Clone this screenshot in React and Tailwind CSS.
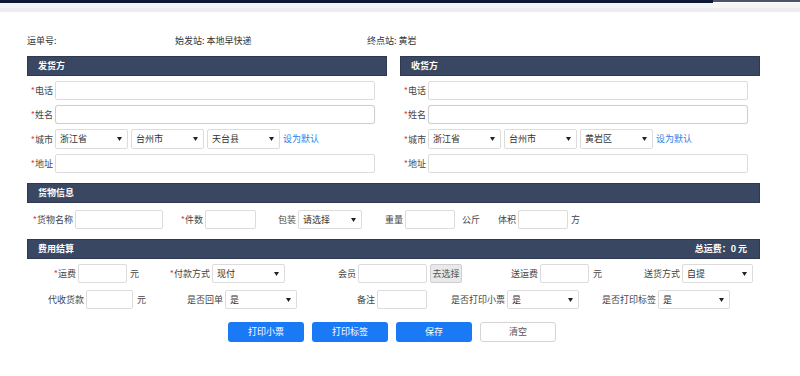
import React from 'react'

const FONT = { fontFamily: '"Noto Sans CJK SC", "Noto Sans", sans-serif' }

function Star() {
  return <span className="text-[#e43b3b]">*</span>
}

function Label({ w, req, children }) {
  return (
    <div className={`${w} shrink-0 text-right pr-[2px] text-[9px] text-[#444] leading-none`}>
      {req && <Star />}
      {children}
    </div>
  )
}

function Input({ w, h = 'h-[19px]' }) {
  return <div className={`${w} ${h} shrink-0 bg-white border border-[#dcdcdc] rounded-[2px]`} />
}

function Select({ w, value, h = 'h-[19px]' }) {
  return (
    <div className={`${w} ${h} shrink-0 flex items-center justify-between bg-white border border-[#dcdcdc] rounded-[2px] pl-[4px] pr-[5px] text-[9px] text-[#333]`}>
      <span>{value}</span>
      <svg width="5" height="4" viewBox="0 0 5 4">
        <path d="M0 0 L5 0 L2.5 4 Z" fill="#222" />
      </svg>
    </div>
  )
}

function Header({ title, right }) {
  return (
    <div className="h-[20px] flex items-center justify-between bg-[#3a4762] border border-[#2f3a52] pl-[10px] pr-[12px] text-white text-[9px] font-bold">
      <span>{title}</span>
      {right && <span>{right}</span>}
    </div>
  )
}

function Party({ title, district }) {
  return (
    <div className="w-[360px] flex flex-col">
      <Header title={title} />
      <div className="mt-[5px] flex flex-col gap-[5px]">
        <div className="flex items-center">
          <Label w="w-[28px]" req>电话</Label>
          <Input w="w-[320px]" />
        </div>
        <div className="flex items-center">
          <Label w="w-[28px]" req>姓名</Label>
          <div className="w-[320px] h-[19px] bg-white border border-[#cfcfcf] rounded-[3px] shadow-[0_0_1px_#ddd]" />
        </div>
        <div className="flex items-center">
          <Label w="w-[28px]" req>城市</Label>
          <Select w="w-[73px]" h="h-[20px]" value="浙江省" />
          <div className="ml-[3px]"><Select w="w-[73px]" h="h-[20px]" value="台州市" /></div>
          <div className="ml-[3px]"><Select w="w-[73px]" h="h-[20px]" value={district} /></div>
          <span className="ml-[3px] text-[9px] text-[#2b7fe8]">设为默认</span>
        </div>
        <div className="flex items-center">
          <Label w="w-[28px]" req>地址</Label>
          <Input w="w-[320px]" />
        </div>
      </div>
    </div>
  )
}

function Unit({ ml, children }) {
  return <span className={`${ml} text-[9px] text-[#444] shrink-0`}>{children}</span>
}

function Btn({ children, white }) {
  return (
    <div
      className={
        white
          ? 'w-[76px] h-[20px] flex items-center justify-center rounded-[3px] border border-[#d5d5d5] bg-white text-[#555] text-[9px]'
          : 'w-[76px] h-[20px] flex items-center justify-center rounded-[3px] bg-[#1a7af6] text-white text-[9px]'
      }
    >
      {children}
    </div>
  )
}

export default function App() {
  return (
    <div className="w-[800px] h-[376px] bg-white overflow-hidden" style={FONT}>
      {/* top strip */}
      <div className="flex h-[3px]">
        <div className="w-[713px] bg-[#0e1a33]" />
        <div className="flex-1 h-[2px] bg-[#4b5468]" />
      </div>
      <div className="h-[5px] bg-[#f5f5f7]" />
      <div className="h-[4px] bg-[#ededed]" />

      <div className="pl-[27px] pt-[23px]">
        {/* waybill info */}
        <div className="flex items-center h-[12px] text-[9px] text-[#333]">
          <span className="w-[148px]">运单号:</span>
          <span className="w-[192px]">始发站: 本地早快递</span>
          <span>终点站: 黄岩</span>
        </div>

        {/* sender / receiver */}
        <div className="mt-[9px] flex gap-[13px]">
          <Party title="发货方" district="天台县" />
          <Party title="收货方" district="黄岩区" />
        </div>

        {/* cargo */}
        <div className="mt-[10px] w-[733px]">
          <Header title="货物信息" />
          <div className="mt-[7px] flex items-center">
            <Label w="w-[48px]" req>货物名称</Label>
            <Input w="w-[88px]" />
            <Label w="w-[42px]" req>件数</Label>
            <Input w="w-[51px]" />
            <Label w="w-[42px]">包装</Label>
            <Select w="w-[64px]" value="请选择" />
            <Label w="w-[43px]">重量</Label>
            <Input w="w-[50px]" />
            <Unit ml="ml-[7px]">公斤</Unit>
            <Label w="w-[38px]">体积</Label>
            <Input w="w-[50px]" />
            <Unit ml="ml-[3px]">方</Unit>
          </div>
        </div>

        {/* fees */}
        <div className="mt-[10px] w-[733px]">
          <Header title="费用结算" right="总运费：0 元" />
          <div className="mt-[5px] flex items-center">
            <Label w="w-[51px]" req>运费</Label>
            <Input w="w-[49px]" />
            <Unit ml="ml-[3px]">元</Unit>
            <Label w="w-[73px]" req>付款方式</Label>
            <Select w="w-[73px]" value="现付" />
            <Label w="w-[73px]">会员</Label>
            <Input w="w-[69px]" />
            <div className="ml-[3px] w-[32px] h-[19px] flex items-center justify-center bg-[#e9e9e9] border border-[#cfcfcf] rounded-[2px] text-[9px] text-[#555]">去选择</div>
            <Label w="w-[78px]">送运费</Label>
            <Input w="w-[49px]" />
            <Unit ml="ml-[4px]">元</Unit>
            <Label w="w-[80px]">送货方式</Label>
            <Select w="w-[71px]" value="自提" />
          </div>
          <div className="mt-[7px] flex items-center">
            <Label w="w-[59px]">代收货款</Label>
            <Input w="w-[47px]" />
            <Unit ml="ml-[4px]">元</Unit>
            <Label w="w-[79px]">是否回单</Label>
            <Select w="w-[72px]" value="是" />
            <Label w="w-[80px]">备注</Label>
            <Input w="w-[50px]" />
            <Label w="w-[80px]">是否打印小票</Label>
            <Select w="w-[72px]" value="是" />
            <Label w="w-[79px]">是否打印标签</Label>
            <Select w="w-[72px]" value="是" />
          </div>
        </div>

        {/* actions */}
        <div className="mt-[13px] ml-[201px] flex gap-[8px]">
          <Btn>打印小票</Btn>
          <Btn>打印标签</Btn>
          <Btn>保存</Btn>
          <Btn white>清空</Btn>
        </div>
      </div>
    </div>
  )
}
